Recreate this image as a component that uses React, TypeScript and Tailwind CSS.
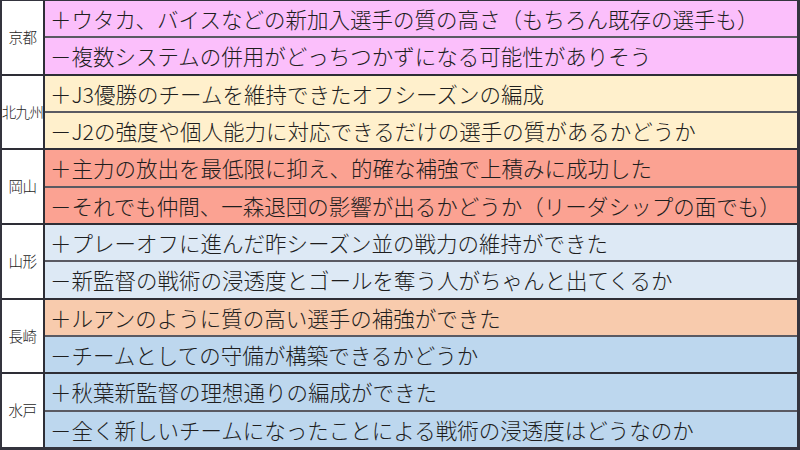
import React from "react";

type Group = { label: string; rows: { text: string; bg: string }[] };

const groups: Group[] = [
  {
    label: "京都",
    rows: [
      { text: "＋ウタカ、バイスなどの新加入選手の質の高さ（もちろん既存の選手も）", bg: "bg-[#fbbffb]" },
      { text: "－複数システムの併用がどっちつかずになる可能性がありそう", bg: "bg-[#fbbffb]" },
    ],
  },
  {
    label: "北九州",
    rows: [
      { text: "＋J3優勝のチームを維持できたオフシーズンの編成", bg: "bg-[#fff0cc]" },
      { text: "－J2の強度や個人能力に対応できるだけの選手の質があるかどうか", bg: "bg-[#fff0cc]" },
    ],
  },
  {
    label: "岡山",
    rows: [
      { text: "＋主力の放出を最低限に抑え、的確な補強で上積みに成功した", bg: "bg-[#fba292]" },
      { text: "－それでも仲間、一森退団の影響が出るかどうか（リーダシップの面でも）", bg: "bg-[#fba292]" },
    ],
  },
  {
    label: "山形",
    rows: [
      { text: "＋プレーオフに進んだ昨シーズン並の戦力の維持ができた", bg: "bg-[#dde9f5]" },
      { text: "－新監督の戦術の浸透度とゴールを奪う人がちゃんと出てくるか", bg: "bg-[#dde9f5]" },
    ],
  },
  {
    label: "長崎",
    rows: [
      { text: "＋ルアンのように質の高い選手の補強ができた", bg: "bg-[#f8cbad]" },
      { text: "－チームとしての守備が構築できるかどうか", bg: "bg-[#bdd7ee]" },
    ],
  },
  {
    label: "水戸",
    rows: [
      { text: "＋秋葉新監督の理想通りの編成ができた", bg: "bg-[#bdd7ee]" },
      { text: "－全く新しいチームになったことによる戦術の浸透度はどうなのか", bg: "bg-[#bdd7ee]" },
    ],
  },
];

export default function App() {
  return (
    <div
      className="w-[800px] h-[450px] flex flex-col bg-white border-t border-l-2 border-b-[3px] border-r-[3px] border-[#34343e] text-[#1e1e1e]"
      style={{ fontFamily: '"Noto Sans CJK JP", "Noto Sans", sans-serif' }}
    >
      {groups.map((g, i) => (
        <div
          key={g.label}
          className={`flex-1 flex ${i < groups.length - 1 ? "border-b-2 border-[#2e2e36]" : ""}`}
        >
          <div className="w-[43px] shrink-0 bg-white border-r-2 border-[#2e2e36] flex items-center justify-center text-[14.5px] font-light leading-none tracking-[-0.6px] whitespace-nowrap">
            {g.label}
          </div>
          <div className="flex-1 flex flex-col">
            {g.rows.map((r, j) => (
              <div
                key={j}
                className={`flex-1 flex items-center pl-[5px] text-[21.5px] font-light leading-none whitespace-nowrap ${r.bg} ${j === 0 ? "border-b-2 border-[#5a5a62]" : ""}`}
              >
                {r.text}
              </div>
            ))}
          </div>
        </div>
      ))}
    </div>
  );
}
